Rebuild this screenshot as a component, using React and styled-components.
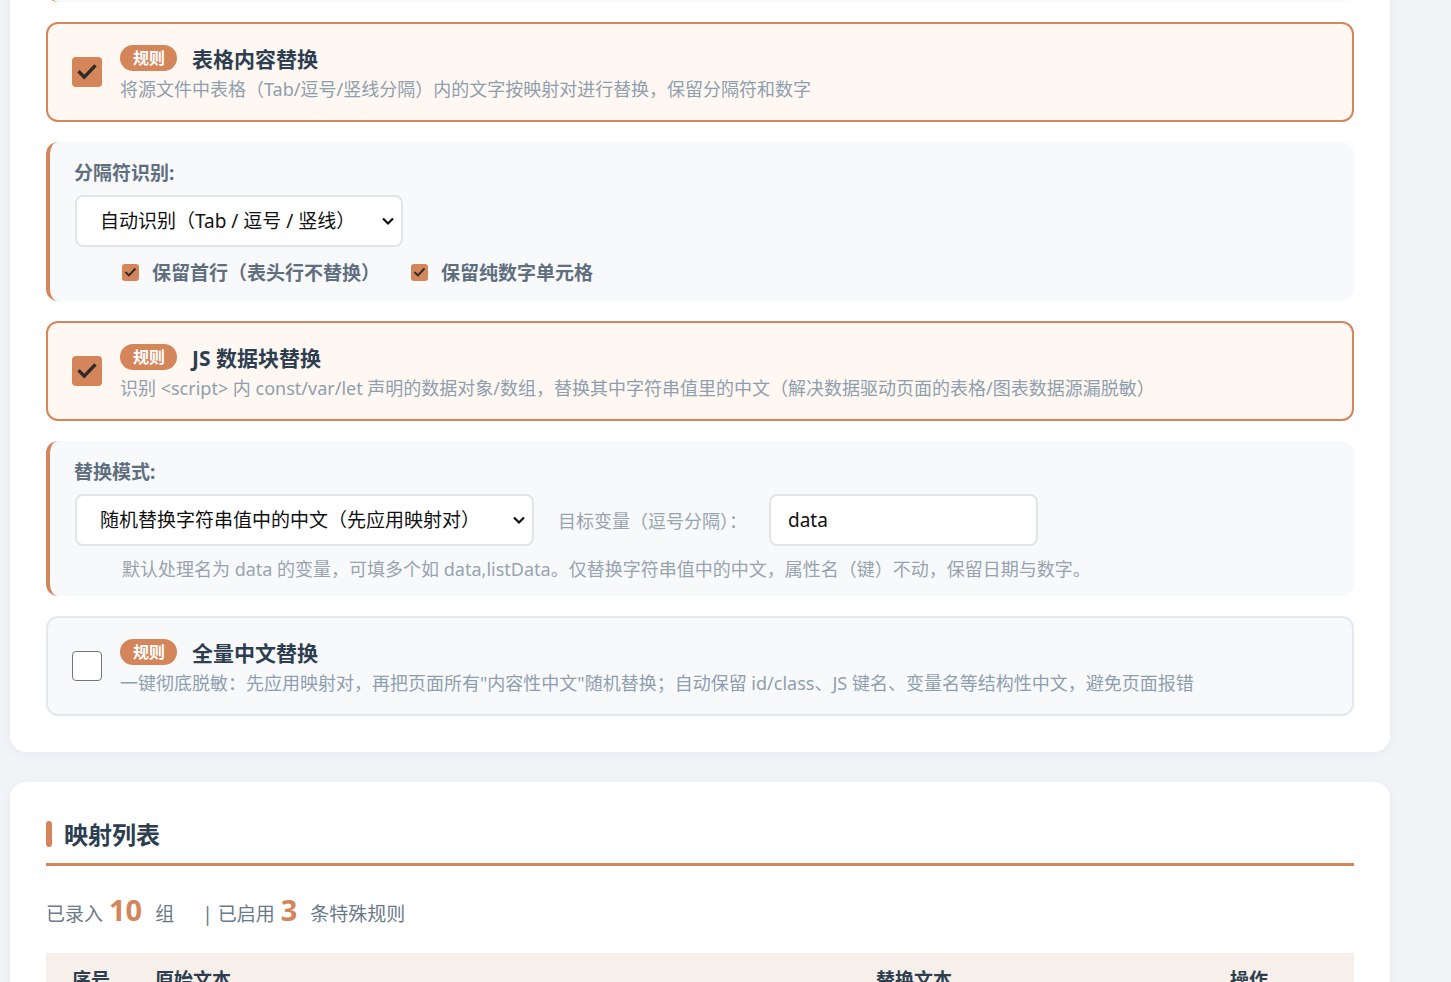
import React from 'react';
import styled, { createGlobalStyle } from 'styled-components';

const GlobalStyle = createGlobalStyle`
  html, body {
    margin: 0;
    padding: 0;
    background: #f3f4f8;
    font-family: "Noto Sans", "Noto Sans CJK SC", sans-serif;
    overflow: hidden;
  }
`;

const ORANGE = '#d4855a';

const Page = styled.div`
  padding: 0 61px 40px 10px;
  width: 1380px;
`;

const Card = styled.section`
  background: #fff;
  border-radius: 16px;
  padding: ${p => (p.$top ? `${p.$top}px` : '36px')} 36px 36px;
  box-shadow: 0 2px 12px rgba(30, 40, 80, 0.05);
  margin-top: ${p => p.$offset || 0}px;
  & + & {
    margin-top: 30px;
  }
`;

const List = styled.div`
  display: flex;
  flex-direction: column;
  gap: 20px;
`;

const RuleBox = styled.label`
  display: flex;
  align-items: center;
  gap: 18px;
  min-height: 100px;
  box-sizing: border-box;
  padding: 18px 24px;
  border-radius: 12px;
  border: 2px solid ${p => (p.$on ? ORANGE : '#e4e7ee')};
  background: ${p => (p.$on ? '#fff7f2' : '#f8f9fb')};
`;

const BigCheck = styled.span`
  flex: none;
  width: 30px;
  height: 30px;
  box-sizing: border-box;
  border-radius: 4px;
  display: flex;
  align-items: center;
  justify-content: center;
  background: ${p => (p.$on ? ORANGE : '#fff')};
  border: ${p => (p.$on ? 'none' : '1.5px solid #767676')};
`;

const SmallCheck = styled.span`
  flex: none;
  width: 17px;
  height: 17px;
  border-radius: 3px;
  background: ${ORANGE};
  display: flex;
  align-items: center;
  justify-content: center;
`;

const RuleText = styled.div`
  display: flex;
  flex-direction: column;
  gap: 3px;
`;

const RuleHead = styled.div`
  display: flex;
  align-items: center;
  gap: 15px;
`;

const Badge = styled.span`
  background: ${ORANGE};
  color: #fff;
  font-weight: 700;
  font-size: 16px;
  line-height: 26px;
  padding: 0 12px 0 13px;
  border-radius: 13px;
`;

const RuleTitle = styled.span`
  font-size: 21px;
  font-weight: 700;
  color: #2c3e50;
`;

const RuleDesc = styled.span`
  font-size: 18px;
  color: #8e9fae;
  line-height: 26px;
`;

const Panel = styled.div`
  background: #f8f9fb;
  border-left: 4px solid ${ORANGE};
  border-radius: 12px;
  padding: 18px 24px 15px 24px;
  display: flex;
  flex-direction: column;
  gap: 8px;
  height: ${p => (p.$h ? `${p.$h}px` : 'auto')};
  box-sizing: border-box;
`;

const PanelLabel = styled.div`
  font-size: 19px;
  font-weight: 700;
  color: #5f6f7e;
  line-height: 27px;
`;

const Row = styled.div`
  display: flex;
  align-items: center;
  gap: 24px;
`;

const SelectWrap = styled.div`
  position: relative;
  width: ${p => p.$w}px;
  margin-left: 1px;
  flex: none;
`;

const Select = styled.select`
  appearance: none;
  width: 100%;
  height: 52px;
  padding: 0 40px 0 23px;
  border: 2px solid #e2e4e8;
  border-radius: 8px;
  background: #fff;
  font-family: "Noto Sans", "Noto Sans CJK SC", sans-serif;
  font-size: 19px;
  color: #111;
`;

const Chevron = styled.svg`
  position: absolute;
  right: 8px;
  top: 50%;
  margin-top: -6px;
  pointer-events: none;
`;

const Input = styled.input`
  width: 269px;
  height: 52px;
  margin-left: -2px;
  box-sizing: border-box;
  padding: 0 17px;
  border: 2px solid #e2e4e8;
  border-radius: 8px;
  background: #fff;
  font-family: "Noto Sans", "Noto Sans CJK SC", sans-serif;
  font-size: 19px;
  color: #111;
`;

const FieldLabel = styled.span`
  font-size: 18px;
  color: #97a4b0;
`;

const Options = styled.div`
  display: flex;
  align-items: center;
  gap: 31px;
  padding-left: 48px;
  margin-top: 3px;
`;

const Option = styled.label`
  display: flex;
  align-items: center;
  gap: 13px;
  font-size: 19px;
  font-weight: 700;
  color: #5f6f7e;
`;

const Hint = styled.div`
  padding-left: 48px;
  font-size: 18px;
  color: #97a4b0;
  margin-top: 1px;
`;

const SectionTitle = styled.h2`
  margin: 0;
  display: flex;
  align-items: center;
  gap: 12px;
  font-size: 24px;
  font-weight: 700;
  color: #2c3e50;
  padding: 2px 0 12px;
  border-bottom: 3px solid ${ORANGE};
  &::before {
    content: '';
    width: 6px;
    height: 26px;
    border-radius: 3px;
    background: ${ORANGE};
  }
`;

const Stats = styled.div`
  display: flex;
  align-items: baseline;
  margin: 24px 0 24px;
  font-size: 19px;
  color: #6b7a89;
`;

const Num = styled.b`
  font-size: 29px;
  color: ${ORANGE};
  margin: 0 13px 0 6px;
`;

const Sep = styled.span`
  margin-left: 28px;
`;

const TableHead = styled.div`
  display: grid;
  grid-template-columns: 83px 721px 354px 1fr;
  background: #f7efe9;
  padding: 12px 26px;
  font-size: 19px;
  font-weight: 700;
  color: #2c3e50;
`;

const Check = ({ size = 22 }) => (
  <svg width={size} height={size} viewBox="0 0 24 24">
    <path d="M4 12.5l5 5L20 6" fill="none" stroke="#2b2b2b" strokeWidth="3.6" strokeLinecap="square" />
  </svg>
);

function Dropdown({ w, children }) {
  return (
    <SelectWrap $w={w}>
      <Select>{children}</Select>
      <Chevron width="14" height="12" viewBox="0 0 14 12">
        <path d="M2 3.5l5 5 5-5" fill="none" stroke="#111" strokeWidth="2.2" />
      </Chevron>
    </SelectWrap>
  );
}

function Rule({ on, title, desc }) {
  return (
    <RuleBox $on={on}>
      <BigCheck $on={on}>{on && <Check />}</BigCheck>
      <RuleText>
        <RuleHead>
          <Badge>规则</Badge>
          <RuleTitle>{title}</RuleTitle>
        </RuleHead>
        <RuleDesc>{desc}</RuleDesc>
      </RuleText>
    </RuleBox>
  );
}

export default function App() {
  return (
    <Page>
      <GlobalStyle />
      <Card $offset={-192}>
        <List>
          <Panel $h={158}>
            <PanelLabel>标点处理：</PanelLabel>
          </Panel>
          <Rule
            on
            title="表格内容替换"
            desc="将源文件中表格（Tab/逗号/竖线分隔）内的文字按映射对进行替换，保留分隔符和数字"
          />
          <Panel>
            <PanelLabel>分隔符识别:</PanelLabel>
            <Dropdown w={328}>
              <option value="auto">自动识别（Tab / 逗号 / 竖线）</option>
            </Dropdown>
            <Options>
              <Option>
                <SmallCheck><Check size={13} /></SmallCheck>
                保留首行（表头行不替换）
              </Option>
              <Option>
                <SmallCheck><Check size={13} /></SmallCheck>
                保留纯数字单元格
              </Option>
            </Options>
          </Panel>
          <Rule
            on
            title="JS 数据块替换"
            desc="识别 <script> 内 const/var/let 声明的数据对象/数组，替换其中字符串值里的中文（解决数据驱动页面的表格/图表数据源漏脱敏）"
          />
          <Panel>
            <PanelLabel>替换模式:</PanelLabel>
            <Row>
              <Dropdown w={459}>
                <option value="random">随机替换字符串值中的中文（先应用映射对）</option>
              </Dropdown>
              <FieldLabel>目标变量（逗号分隔）：</FieldLabel>
              <Input defaultValue="data" />
            </Row>
            <Hint>默认处理名为 data 的变量，可填多个如 data,listData。仅替换字符串值中的中文，属性名（键）不动，保留日期与数字。</Hint>
          </Panel>
          <Rule
            title="全量中文替换"
            desc={'一键彻底脱敏：先应用映射对，再把页面所有"内容性中文"随机替换；自动保留 id/class、JS 键名、变量名等结构性中文，避免页面报错'}
          />
        </List>
      </Card>
      <Card $top={32}>
        <SectionTitle>映射列表</SectionTitle>
        <Stats>
          已录入<Num>10</Num>组
          <Sep>| 已启用</Sep><Num>3</Num>条特殊规则
        </Stats>
        <TableHead>
          <span>序号</span>
          <span>原始文本</span>
          <span>替换文本</span>
          <span>操作</span>
        </TableHead>
      </Card>
    </Page>
  );
}
